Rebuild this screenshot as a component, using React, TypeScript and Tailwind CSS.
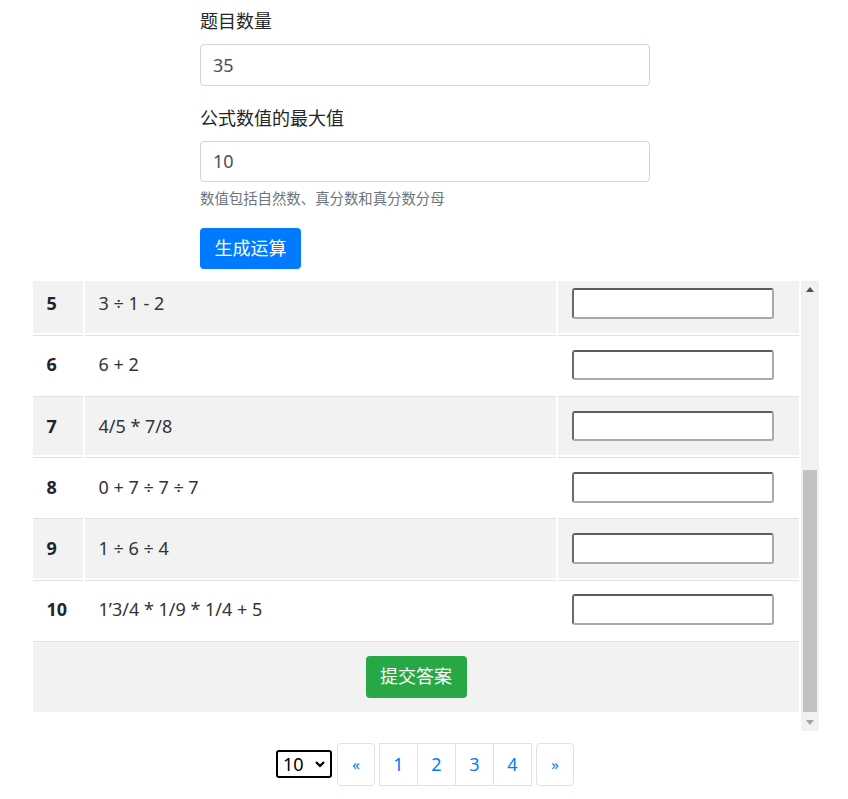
import React from 'react';

interface Question {
  no: number;
  expr: string;
}

// rows 5-10 are what the scroll box shows
const questions: Question[] = [
  { no: 5, expr: '3 ÷ 1 - 2' },
  { no: 6, expr: '6 + 2' },
  { no: 7, expr: '4/5 * 7/8' },
  { no: 8, expr: '0 + 7 ÷ 7 ÷ 7' },
  { no: 9, expr: '1 ÷ 6 ÷ 4' },
  { no: 10, expr: '1’3/4 * 1/9 * 1/4 + 5' },
];

const pages = [1, 2, 3, 4];

const QuestionRow: React.FC<{ q: Question; striped: boolean }> = ({ q, striped }) => {
  const cell = `h-[59.2px] border-t border-[#dee2e6] flex items-center ${striped ? 'bg-[#f2f2f2]' : 'bg-white'}`;
  return (
    <div className="grid grid-cols-[50px_471px_241px] gap-x-[2px]">
      <div className={`${cell} pl-[13.5px] font-bold`}>{q.no}</div>
      <div className={`${cell} pl-[13.5px] text-[#333]`}>{q.expr}</div>
      <div className={`${cell} pl-[13.5px]`}>
        <input
          type="text"
          className="h-[30.5px] w-[202px] rounded-[3px] border-2 border-t-[#5c5c5c] border-l-[#6a6a6a] border-b-[#a9a9a9] border-r-[#a9a9a9] bg-white px-1 outline-none"
        />
      </div>
    </div>
  );
};

const ScrollBar: React.FC = () => (
  <div className="flex w-[18px] flex-col bg-[#f1f1f1]">
    <div className="flex h-[17px] items-center justify-center">
      <svg width="8" height="5" viewBox="0 0 8 5">
        <polygon points="4,0 8,5 0,5" fill="#505050" />
      </svg>
    </div>
    <div className="flex-1" />
    <div className="mx-[2px] h-[242px] bg-[#c1c1c1]" />
    <div className="mt-[2px] flex h-[17px] items-center justify-center">
      <svg width="8" height="5" viewBox="0 0 8 5">
        <polygon points="0,0 8,0 4,5" fill="#a3a3a3" />
      </svg>
    </div>
  </div>
);

export default function App() {
  return (
    <div className="min-h-screen bg-white font-['Noto_Sans','Noto_Sans_CJK_SC',sans-serif] text-[18px] leading-[27px] text-[#212529]">
      {/* generator form */}
      <div className="ml-[200px] w-[450px] pt-[8px]">
        <label className="mb-[9px] block">题目数量</label>
        <input
          type="text"
          defaultValue="35"
          className="h-[41.5px] w-full rounded-[4px] border border-[#ced4da] bg-white px-[12px] text-[#495057] outline-none"
        />
        <label className="mb-[9px] mt-[19px] block">公式数值的最大值</label>
        <input
          type="text"
          defaultValue="10"
          className="h-[41.5px] w-full rounded-[4px] border border-[#ced4da] bg-white px-[12px] text-[#495057] outline-none"
        />
        <p className="mt-[6px] text-[14.4px] leading-[21.6px] text-[#6c757d]">数值包括自然数、真分数和真分数分母</p>
        <button className="mt-[18px] flex h-[41.5px] w-[101px] items-center justify-center rounded-[4px] bg-[#007bff] text-white">
          生成运算
        </button>
      </div>

      {/* questions, scrolled to the end */}
      <div className="ml-[33px] mt-[11.5px] flex h-[450px] w-[786px]">
        <div className="w-[768px] overflow-hidden">
          <div className="-mt-[7px] flex flex-col gap-y-[2px]">
            {questions.map((q) => (
              <QuestionRow key={q.no} q={q} striped={q.no % 2 === 1} />
            ))}
            <div className="flex h-[71px] w-[766px] items-center justify-center border-t border-[#dee2e6] bg-[#f2f2f2]">
              <button className="flex h-[42px] w-[101px] items-center justify-center rounded-[4px] bg-[#28a745] text-white">
                提交答案
              </button>
            </div>
          </div>
        </div>
        <ScrollBar />
      </div>

      {/* pagination */}
      <div className="mt-[12px] flex items-center justify-center pl-[2px]">
        <div className="mr-[5px] flex h-[28px] w-[56px] items-center justify-between rounded-[3px] border-2 border-black pl-[5px] pr-[5px] text-black">
          <span>10</span>
          <svg width="10" height="7" viewBox="0 0 10 7">
            <polyline points="1,1 5,5 9,1" fill="none" stroke="#000" strokeWidth="2.2" />
          </svg>
        </div>
        <div className="flex h-[43px] w-[38px] items-center justify-center rounded-[4px] border border-[#dee2e6] text-[15px] text-[#007bff]">
          «
        </div>
        <div className="ml-[4px] flex">
          {pages.map((p, i) => (
            <div
              key={p}
              className={`flex h-[43px] w-[39px] items-center justify-center border border-[#dee2e6] text-[#007bff] ${i > 0 ? '-ml-px' : ''}`}
            >
              {p}
            </div>
          ))}
        </div>
        <div className="ml-[4px] flex h-[43px] w-[38px] items-center justify-center rounded-[4px] border border-[#dee2e6] text-[15px] text-[#007bff]">
          »
        </div>
      </div>
    </div>
  );
}
